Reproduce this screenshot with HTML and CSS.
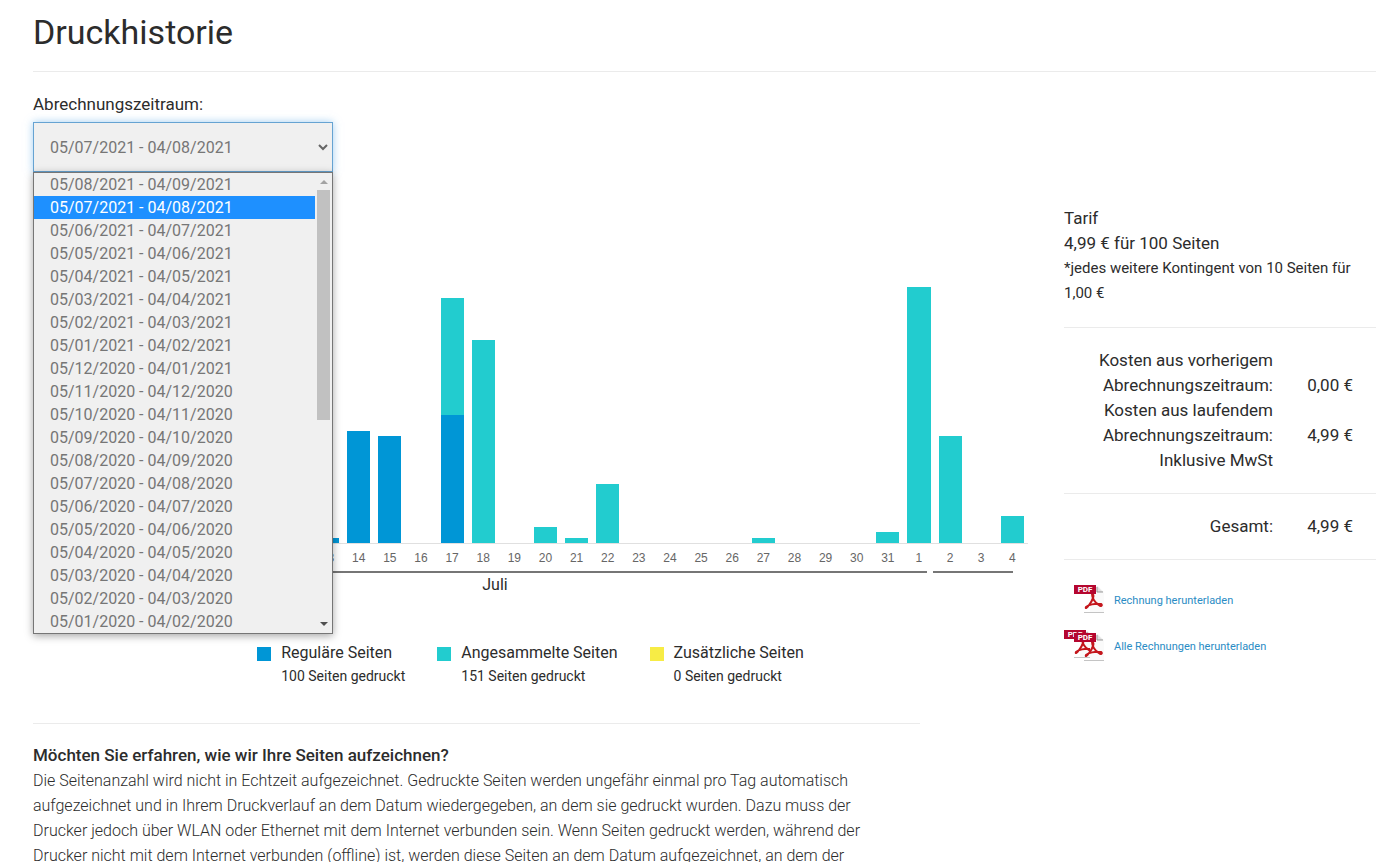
FILE: index.html
```html
<!DOCTYPE html>
<html lang="de">
<head>
  <meta charset="UTF-8">
  <meta name="viewport" content="width=device-width, initial-scale=1.0">
  <title>Druckhistorie</title>
  <link rel="stylesheet" href="styles.css">
</head>
<body>

<header class="page-header">
  <h1>Druckhistorie</h1>
</header>

<main class="content">
  <section class="history">
    <div class="period">
      <label for="period">Abrechnungszeitraum:</label>
      <div class="select-wrap">
        <select id="period" class="period-select">
          <option>05/07/2021 - 04/08/2021</option>
        </select>
        <svg class="chevron" viewBox="0 0 10 8"><path d="M1 2L5 6L9 2" fill="none" stroke="#666" stroke-width="2"/></svg>
        <div class="menu">
          <ul class="menu-list" role="listbox" aria-label="Abrechnungszeitraum">
            <li role="option">05/08/2021 - 04/09/2021</li>
            <li role="option" class="selected" aria-selected="true">05/07/2021 - 04/08/2021</li>
            <li role="option">05/06/2021 - 04/07/2021</li>
            <li role="option">05/05/2021 - 04/06/2021</li>
            <li role="option">05/04/2021 - 04/05/2021</li>
            <li role="option">05/03/2021 - 04/04/2021</li>
            <li role="option">05/02/2021 - 04/03/2021</li>
            <li role="option">05/01/2021 - 04/02/2021</li>
            <li role="option">05/12/2020 - 04/01/2021</li>
            <li role="option">05/11/2020 - 04/12/2020</li>
            <li role="option">05/10/2020 - 04/11/2020</li>
            <li role="option">05/09/2020 - 04/10/2020</li>
            <li role="option">05/08/2020 - 04/09/2020</li>
            <li role="option">05/07/2020 - 04/08/2020</li>
            <li role="option">05/06/2020 - 04/07/2020</li>
            <li role="option">05/05/2020 - 04/06/2020</li>
            <li role="option">05/04/2020 - 04/05/2020</li>
            <li role="option">05/03/2020 - 04/04/2020</li>
            <li role="option">05/02/2020 - 04/03/2020</li>
            <li role="option">05/01/2020 - 04/02/2020</li>
          </ul>
          <div class="scrollbar">
            <svg class="arrow arrow-up" viewBox="0 0 8 4"><path d="M0 4L4 0L8 4Z"/></svg>
            <div class="thumb"></div>
            <svg class="arrow arrow-down" viewBox="0 0 8 4"><path d="M0 0L4 4L8 0Z"/></svg>
          </div>
        </div>
      </div>
    </div>

    <div class="chart">
      <div class="plot" id="plot"></div>
      <div class="days" id="days"></div>
      <div class="months">
        <div class="month july">Juli</div>
        <div class="month august"></div>
      </div>
    </div>

    <ul class="legend">
      <li>
        <span class="swatch regular"></span>
        <div><strong>Reguläre Seiten</strong><span>100 Seiten gedruckt</span></div>
      </li>
      <li>
        <span class="swatch rollover"></span>
        <div><strong>Angesammelte Seiten</strong><span>151 Seiten gedruckt</span></div>
      </li>
      <li>
        <span class="swatch extra"></span>
        <div><strong>Zusätzliche Seiten</strong><span>0 Seiten gedruckt</span></div>
      </li>
    </ul>

    <div class="info">
      <h2>Möchten Sie erfahren, wie wir Ihre Seiten aufzeichnen?</h2>
      <p>Die Seitenanzahl wird nicht in Echtzeit aufgezeichnet. Gedruckte Seiten werden ungefähr einmal pro Tag automatisch<br>
      aufgezeichnet und in Ihrem Druckverlauf an dem Datum wiedergegeben, an dem sie gedruckt wurden. Dazu muss der<br>
      Drucker jedoch über WLAN oder Ethernet mit dem Internet verbunden sein. Wenn Seiten gedruckt werden, während der<br>
      Drucker nicht mit dem Internet verbunden (offline) ist, werden diese Seiten an dem Datum aufgezeichnet, an dem der</p>
    </div>
  </section>

  <aside class="summary">
    <div class="plan">
      <h3>Tarif</h3>
      <p class="price">4,99 € für 100 Seiten</p>
      <p class="note">*jedes weitere Kontingent von 10 Seiten für 1,00 €</p>
    </div>
    <table class="costs">
      <tbody>
        <tr><th scope="row">Kosten aus vorherigem Abrechnungszeitraum:</th><td>0,00 €</td></tr>
        <tr><th scope="row">Kosten aus laufendem Abrechnungszeitraum:</th><td>4,99 €</td></tr>
        <tr><th scope="row">Inklusive MwSt</th><td></td></tr>
      </tbody>
      <tbody>
        <tr><th scope="row">Gesamt:</th><td>4,99 €</td></tr>
      </tbody>
    </table>
    <div class="downloads">
      <a href="#">
        <svg class="pdf" viewBox="0 0 40 32">
          <use href="#pdf-doc" x="10" y="1"/>
        </svg>
        Rechnung herunterladen
      </a>
      <a href="#">
        <svg class="pdf" viewBox="0 0 40 32">
          <use href="#pdf-doc" x="0" y="0"/>
          <use href="#pdf-doc" x="10" y="3"/>
        </svg>
        Alle Rechnungen herunterladen
      </a>
    </div>
  </aside>
</main>

<svg class="defs" aria-hidden="true">
  <defs>
    <g id="pdf-doc">
      <path d="M16 1H24L30 7V28H16Z" fill="#fafafa"/>
      <path d="M10 27.5H30" stroke="#c4c4c4"/>
      <path d="M23 1L29 7H23Z" fill="#e2e2e2"/>
      <path d="M23 2V7H29" fill="none" stroke="#999"/>
      <path d="M18 9C21 9 19 15 15 20C13 23 11 24 12 22C14 20 21 18 27 19C29 20 27 22 25 20C21 18 18 13 18 9Z" fill="none" stroke="#c4161c" stroke-width="2"/>
      <path d="M0 0H22V9H0Z" fill="#b5062f"/>
      <text x="11" y="7" class="pdf-label">PDF</text>
    </g>
  </defs>
</svg>

<script>
  // [day, regular pages, rollover pages]
  const usage = [
    [5, 0, 0], [6, 0, 0], [7, 0, 0], [8, 0, 0], [9, 0, 0], [10, 0, 0], [11, 0, 0],
    [12, 0, 0], [13, 1, 0], [14, 21, 0], [15, 20, 0], [16, 0, 0], [17, 24, 22],
    [18, 0, 38], [19, 0, 0], [20, 0, 3], [21, 0, 1], [22, 0, 11], [23, 0, 0],
    [24, 0, 0], [25, 0, 0], [26, 0, 0], [27, 0, 1], [28, 0, 0], [29, 0, 0],
    [30, 0, 0], [31, 0, 2], [1, 0, 48], [2, 0, 20], [3, 0, 0], [4, 0, 5]
  ];
  const maxPages = 60;
  const plot = document.getElementById('plot');
  const days = document.getElementById('days');

  function addBar(column, type, pages) {
    if (!pages) {
      return;
    }
    const bar = document.createElement('div');
    bar.className = 'bar ' + type;
    bar.style.height = (pages / maxPages * 100) + '%';
    column.appendChild(bar);
  }

  for (const [day, regular, rollover] of usage) {
    const column = document.createElement('div');
    column.className = 'column';
    addBar(column, 'rollover', rollover);
    addBar(column, 'regular', regular);
    plot.appendChild(column);

    const label = document.createElement('span');
    label.textContent = day;
    days.appendChild(label);
  }
</script>

</body>
</html>
```
FILE: styles.css
```css
* {
  box-sizing: border-box;
}
body {
  margin: 0;
  padding-left: 33px;
  font-family: Roboto, "Liberation Sans", sans-serif;
  font-size: 17px;
  line-height: 25px;
  color: #2c2c2c;
  background: #fff;
}
h1, h2, h3, p, ul {
  margin: 0;
  padding: 0;
  font-weight: normal;
}
ul {
  list-style: none;
}
.page-header {
  padding: 12px 0 19px;
  border-bottom: 1px solid #ebebeb;
}
h1 {
  font-size: 34px;
  line-height: 40px;
}
.content {
  display: grid;
  grid-template-columns: minmax(0, 1fr) 312px;
  gap: 36px;
}

/* billing period */
.period {
  width: 300px;
  padding-top: 20px;
}
.period label {
  display: block;
  margin-bottom: 6px;
  line-height: 24px;
}
.select-wrap {
  position: relative;
}
.period-select {
  display: block;
  width: 100%;
  height: 50px;
  padding: 0 16px;
  font: inherit;
  font-size: 16px;
  color: #767676;
  background: #f0f0f0;
  border: 1px solid #66a3d2;
  border-radius: 0;
  box-shadow: 0 0 8px rgba(102, 175, 233, 0.6);
  appearance: none;
  outline: none;
}
.chevron {
  position: absolute;
  top: 21px;
  right: 5px;
  width: 10px;
  height: 8px;
}
.menu {
  position: absolute;
  top: 100%;
  left: 0;
  z-index: 1;
  display: flex;
  width: 100%;
  background: #f0f0f0;
  border: 1px solid #767676;
  box-shadow: 0 2px 8px rgba(0, 0, 0, 0.35);
}
.menu-list {
  flex: 1;
  font-size: 16px;
  line-height: 23px;
  color: #767676;
}
.menu-list li {
  padding-left: 16px;
}
.menu-list .selected {
  color: #fff;
  background: #1e90ff;
}
.scrollbar {
  display: flex;
  flex-direction: column;
  align-items: center;
  width: 17px;
  padding: 7px 0;
}
.arrow {
  width: 8px;
  height: 4px;
}
.arrow-up {
  fill: #a3a3a3;
}
.arrow-down {
  margin-top: auto;
  fill: #505050;
}
.thumb {
  width: 13px;
  height: 230px;
  margin-top: 6px;
  background: #c1c1c1;
}

/* chart */
.chart {
  margin: 51px 0 0 30px;
}
.plot {
  display: flex;
  height: 321px;
  border-bottom: 1px solid #e0e0e0;
}
.column {
  flex: 1;
  display: flex;
  flex-direction: column;
  justify-content: flex-end;
  padding: 0 4px;
}
.regular {
  background: #0096d6;
}
.rollover {
  background: #22cccf;
}
.extra {
  background: #f7ec45;
}
.days {
  display: flex;
  padding-top: 2px;
  font-family: "Liberation Sans", Arial, sans-serif;
  font-size: 12px;
  line-height: 25px;
  color: #666;
  text-align: center;
}
.days span {
  flex: 1;
}
.months {
  display: flex;
  gap: 6px;
  padding-right: 15px;
  font-size: 16px;
  line-height: 24px;
  text-align: center;
}
.month {
  border-top: 2px solid #767676;
}
.july {
  flex: 1;
}
.august {
  width: 80px;
}

/* legend */
.legend {
  display: flex;
  justify-content: center;
  gap: 32px;
  margin-top: 44px;
}
.legend li {
  display: flex;
  gap: 10px;
}
.swatch {
  width: 14px;
  height: 14px;
  margin-top: 6px;
}
.legend strong {
  display: block;
  font-size: 16px;
  font-weight: normal;
  line-height: 24px;
}
.legend div span {
  display: block;
  font-size: 14px;
  line-height: 22px;
}

/* info text */
.info {
  max-width: 887px;
  margin-top: 36px;
  padding-top: 19px;
  border-top: 1px solid #ebebeb;
}
.info h2 {
  font-size: 17px;
  font-weight: 500;
}
.info p {
  font-size: 16px;
  font-weight: 300;
  white-space: nowrap;
}

/* summary */
.summary {
  padding-top: 134px;
}
.plan {
  padding-bottom: 21px;
  border-bottom: 1px solid #ebebeb;
}
.plan h3 {
  font-size: 17px;
}
.note {
  font-size: 15px;
}
.costs {
  width: 100%;
  border-collapse: collapse;
}
.costs tbody {
  border-bottom: 1px solid #ebebeb;
}
.costs th,
.costs td {
  padding: 0;
  font-weight: normal;
  text-align: right;
  vertical-align: bottom;
}
.costs th {
  width: 209px;
  padding-left: 20px;
}
.costs td {
  padding-right: 23px;
}
.costs tr:first-child th,
.costs tr:first-child td {
  padding-top: 20px;
}
.costs tr:last-child th,
.costs tr:last-child td {
  padding-bottom: 20px;
}
.downloads {
  display: flex;
  flex-direction: column;
  gap: 14px;
  padding-top: 24px;
}
.downloads a {
  display: flex;
  align-items: center;
  gap: 10px;
  font-size: 11px;
  color: #2a8cc4;
  text-decoration: none;
}
.pdf {
  width: 40px;
  height: 32px;
}
.pdf-label {
  font-size: 8px;
  font-weight: 700;
  fill: #fff;
  text-anchor: middle;
}
.defs {
  position: absolute;
  width: 0;
  height: 0;
}
```
